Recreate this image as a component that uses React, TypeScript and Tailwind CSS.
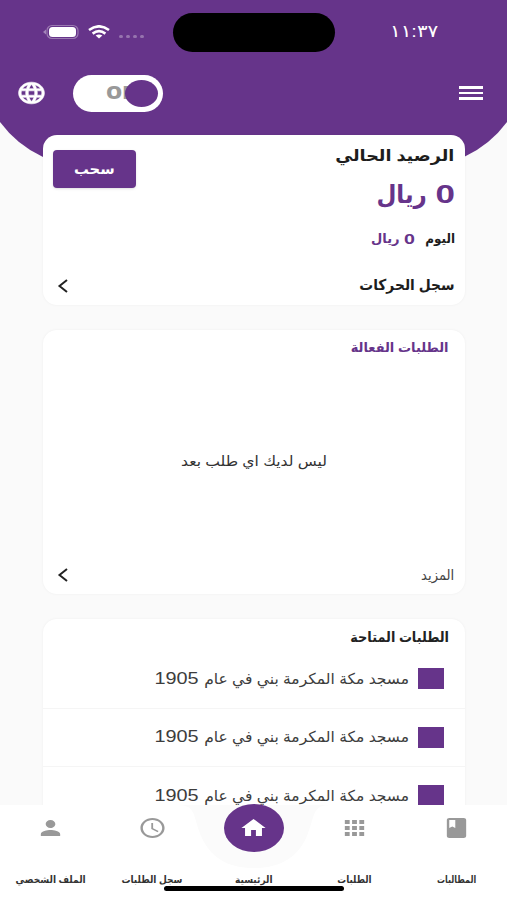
import type { ReactNode } from "react";
import clsx from "clsx";

const orders = [1, 2, 3];

const tabs = [
  {
    label: "المطالبات",
    stretch: "scale-x-[0.8]",
    path: "M18 2H6c-1.1 0-2 .9-2 2v16c0 1.1.9 2 2 2h12c1.1 0 2-.9 2-2V4c0-1.1-.9-2-2-2zM6 4h5v8l-2.5-1.5L6 12V4z",
  },
  {
    label: "الطلبات",
    stretch: "scale-x-[0.88]",
    path: "M4 8h4V4H4v4zm6 12h4v-4h-4v4zm-6 0h4v-4H4v4zm0-6h4v-4H4v4zm6 0h4v-4h-4v4zm6-10v4h4V4h-4zm-6 4h4V4h-4v4zm6 6h4v-4h-4v4zm0 6h4v-4h-4v4z",
  },
  {
    label: "الرئيسية",
    stretch: "scale-x-[0.9]",
    active: true,
    path: "M10 20v-6h4v6h5v-8h3L12 3 2 12h3v8z",
  },
  {
    label: "سجل الطلبات",
    stretch: "scale-x-[0.9]",
    path: "M11.99 2C6.47 2 2 6.48 2 12s4.47 10 9.99 10C17.52 22 22 17.52 22 12S17.52 2 11.99 2zM12 20c-4.42 0-8-3.58-8-8s3.58-8 8-8 8 3.58 8 8-3.58 8-8 8zm.5-13H11v6l5.25 3.15.75-1.23-4.5-2.67z",
  },
  {
    label: "الملف الشخصي",
    stretch: "scale-x-[0.91]",
    path: "M12 12c2.21 0 4-1.79 4-4s-1.79-4-4-4-4 1.79-4 4 1.79 4 4 4zm0 2c-2.67 0-8 1.34-8 4v2h16v-2c0-2.66-5.33-4-8-4z",
  },
];

function Icon({ path, className }: { path: string; className?: string }) {
  return (
    <svg viewBox="0 0 24 24" preserveAspectRatio="none" fill="currentColor" className={className}>
      <path d={path} />
    </svg>
  );
}

function Card({ className, children }: { className?: string; children: ReactNode }) {
  return (
    <section className={clsx("w-[422px] shrink-0 rounded-[14px] bg-white shadow-[0_0_3px_rgba(0,0,0,0.05)]", className)}>
      {children}
    </section>
  );
}

function Chevron() {
  return (
    <svg viewBox="0 0 12 14" className="h-3.5 w-3 fill-none stroke-[#222] stroke-2">
      <path d="M10 1 2.5 7 10 13" />
    </svg>
  );
}

function StatusBar() {
  return (
    <div dir="ltr" className="flex h-16 items-center pl-[43px]">
      <svg viewBox="0 0 37 16" className="h-4 w-[37px]">
        <path d="M3 5.5v5L0 8z" fill="#a385b9" />
        <rect x="4" y="1.5" width="31" height="13" rx="5" fill="none" stroke="#9a79b1" strokeWidth="1.2" />
        <rect x="6" y="3" width="27" height="10" rx="3.5" fill="#fff" />
      </svg>
      <svg viewBox="0 0 22 14" className="ml-2 h-3.5 w-[22px] fill-none stroke-white stroke-[2.6]">
        <path d="M1 5Q11-2.4 21 5" />
        <path d="M4.6 8.600Q11 3.800 17.400 8.600" />
        <path d="M7.600 10.600Q11 8.300 14.400 10.600L11 13.600z" fill="#fff" stroke="none" />
      </svg>
      <div className="mt-2 ml-[9px] flex gap-[3px]">
        {[0, 1, 2, 3].map((dot) => (
          <span key={dot} className="h-[3px] w-1 rounded-full bg-[#9674ae]" />
        ))}
      </div>
      <div className="ml-[29px] h-[39px] w-[162px] rounded-full bg-black" />
      <span className="ml-[55px] origin-left scale-x-[1.17] text-[17px] text-white">١١:٣٧</span>
    </div>
  );
}

function Header() {
  return (
    <header className="relative h-[135px] shrink-0">
      <svg viewBox="0 0 507 190" className="absolute top-0 left-0 h-[190px] w-[507px]">
        <path d="M0 0H507V122Q490 145 464 157Q370 190 253 190Q137 190 43 157Q17 145 0 122z" fill="#66348a" />
      </svg>
      <div className="relative">
        <StatusBar />
        <div dir="ltr" className="flex h-[58px] items-center px-[18px]">
          <Icon
            className="h-[26px] w-[31px] -translate-x-0.5 stroke-white stroke-[0.5] text-white"
            path="M11.99 2C6.47 2 2 6.48 2 12s4.47 10 9.99 10C17.52 22 22 17.52 22 12S17.52 2 11.99 2zm6.93 6h-2.95c-.32-1.25-.78-2.45-1.38-3.56 1.84.63 3.37 1.91 4.33 3.56zM12 4.04c.83 1.2 1.48 2.53 1.91 3.96h-3.82c.43-1.43 1.08-2.76 1.91-3.96zM4.26 14C4.1 13.36 4 12.69 4 12s.1-1.36.26-2h3.38c-.08.66-.14 1.32-.14 2 0 .68.06 1.34.14 2H4.26zm.82 2h2.95c.32 1.25.78 2.45 1.38 3.56-1.84-.63-3.37-1.9-4.33-3.56zm2.95-8H5.08c.96-1.66 2.49-2.93 4.33-3.56C8.81 5.55 8.35 6.75 8.03 8zM12 19.96c-.83-1.2-1.48-2.53-1.91-3.96h3.82c-.43 1.43-1.08 2.76-1.91 3.96zM14.34 14H9.66c-.09-.66-.16-1.32-.16-2 0-.68.07-1.35.16-2h4.68c.09.65.16 1.32.16 2 0 .68-.07 1.34-.16 2zm.25 5.56c.6-1.11 1.06-2.31 1.38-3.56h2.95c-.96 1.65-2.49 2.93-4.33 3.56zM16.36 14c.08-.66.14-1.32.14-2 0-.68-.06-1.34-.14-2h3.38c.16.64.26 1.31.26 2s-.1 1.36-.26 2h-3.38z"
          />
          <button className="relative ml-6 flex h-[37px] w-[90px] items-center rounded-full bg-white pl-[33px]">
            <span className="origin-left scale-x-[1.2] font-[Open_Sans] text-[17px] font-extrabold text-[#999]">ON</span>
            <span className="absolute top-[5px] right-[5px] h-[27px] w-[33px] rounded-[50%] bg-[#66348a]" />
          </button>
          <div className="mr-1.5 ml-auto flex w-6 flex-col gap-[3px]">
            <span className="h-[2.5px] bg-white" />
            <span className="h-[2.5px] bg-white" />
            <span className="h-[2.5px] bg-white" />
          </div>
        </div>
      </div>
    </header>
  );
}

function Balance() {
  return (
    <Card className="flex h-[170px] justify-between px-2.5 pt-[15px]">
      <div className="flex flex-col items-start text-[#1d1d1d]">
        <h2 className="origin-right -translate-y-px scale-x-[1.1] text-[16px] leading-[14px] font-bold">الرصيد الحالي</h2>
        <p className="mt-[17px] flex gap-[9px] text-[25px] leading-[26px] font-bold text-[#66348a]">
          <span className="w-[19px] origin-right scale-x-[1.4]">0</span>
          <span className="origin-right scale-x-[0.92]">ريال</span>
        </p>
        <p className="mt-6 flex text-[13px] leading-4 font-bold">
          <span className="w-10 origin-right scale-x-[0.92]">اليوم</span>
          <span className="w-[15px] origin-right scale-x-[1.4] text-[14px] text-[#66348a]">0</span>
          <span className="text-[#66348a]">ريال</span>
        </p>
        <p className="mt-7 origin-right scale-x-[0.92] text-[15px] leading-5 font-bold">سجل الحركات</p>
      </div>
      <div className="flex flex-col items-end justify-between pb-3">
        <button className="h-[38px] w-[83px] rounded bg-[#66348a] text-[14px] font-bold text-white shadow">
          <span className="inline-block scale-x-[1.05]">سحب</span>
        </button>
        <div className="flex w-full justify-end pl-1">
          <Chevron />
        </div>
      </div>
    </Card>
  );
}

function ActiveOrders() {
  return (
    <Card className="mt-[25px] flex h-[264px] flex-col px-2.5 pt-2 pb-[9px]">
      <h2 className="mr-1.5 text-[13px] leading-5 font-bold text-[#66348a]">الطلبات الفعالة</h2>
      <p className="flex grow scale-x-[1.11] items-center justify-center text-[14px] text-[#333]">ليس لديك اي طلب بعد</p>
      <div className="flex items-center justify-between pl-1 text-[14px] leading-5 text-[#444]">
        <span className="origin-right scale-x-[0.94]">المزيد</span>
        <Chevron />
      </div>
    </Card>
  );
}

function AvailableOrders() {
  return (
    <Card className="mt-[25px] h-[230px] pt-2">
      <h2 className="mr-4 origin-right scale-x-[0.92] text-[14px] leading-5 font-bold text-[#222]">الطلبات المتاحة</h2>
      <ul className="mt-[3px]">
        {orders.map((order) => (
          <li key={order} className="flex h-[58.5px] items-center border-b border-[#f5f5f5] pr-[21px]">
            <span className="ml-[9px] h-[21px] w-[26px] bg-[#66348a]" />
            <span className="w-[210px] origin-right scale-x-[1.035] text-[15px] whitespace-nowrap text-[#3d3d3d]">
              مسجد مكة المكرمة بني في عام
            </span>
            <span className="origin-right scale-x-[1.24] text-[16px] text-[#3d3d3d]">1905</span>
          </li>
        ))}
      </ul>
    </Card>
  );
}

function TabBar() {
  return (
    <nav className="absolute bottom-0 left-0 h-24 w-full">
      <svg viewBox="0 0 507 96" className="absolute inset-0 h-24 w-full">
        <path d="M0 1H507V96H0z" fill="#fff" />
        <path d="M178 1C196 1 193 12 201 32C212 58 234 64 254 64S296 58 307 32C315 12 312 1 330 1z" fill="#fbfbfb" />
      </svg>
      <ul className="relative flex h-full">
        {tabs.map((tab) => (
          <li key={tab.label} className="flex w-1/5 flex-col items-center">
            <span
              className={clsx(
                "flex h-12 w-[60px] items-center justify-center rounded-[50%]",
                tab.active ? "bg-[#66348a] text-white" : "text-[#999]"
              )}
            >
              <Icon path={tab.path} className="h-6 w-[29px]" />
            </span>
            <span className={clsx("mt-5 text-[10px] leading-4 font-bold whitespace-nowrap text-[#333]", tab.stretch)}>
              {tab.label}
            </span>
          </li>
        ))}
      </ul>
      <div className="absolute bottom-[9px] left-[164px] h-[5px] w-[180px] rounded-full bg-black" />
    </nav>
  );
}

export default function App() {
  return (
    <div
      dir="rtl"
      className="relative flex h-[900px] w-[507px] flex-col overflow-hidden bg-[#fafafa] font-[Liberation_Sans,DejaVu_Sans,sans-serif]"
    >
      <Header />
      <main className="relative flex min-h-0 grow flex-col items-center">
        <Balance />
        <ActiveOrders />
        <AvailableOrders />
      </main>
      <TabBar />
    </div>
  );
}
